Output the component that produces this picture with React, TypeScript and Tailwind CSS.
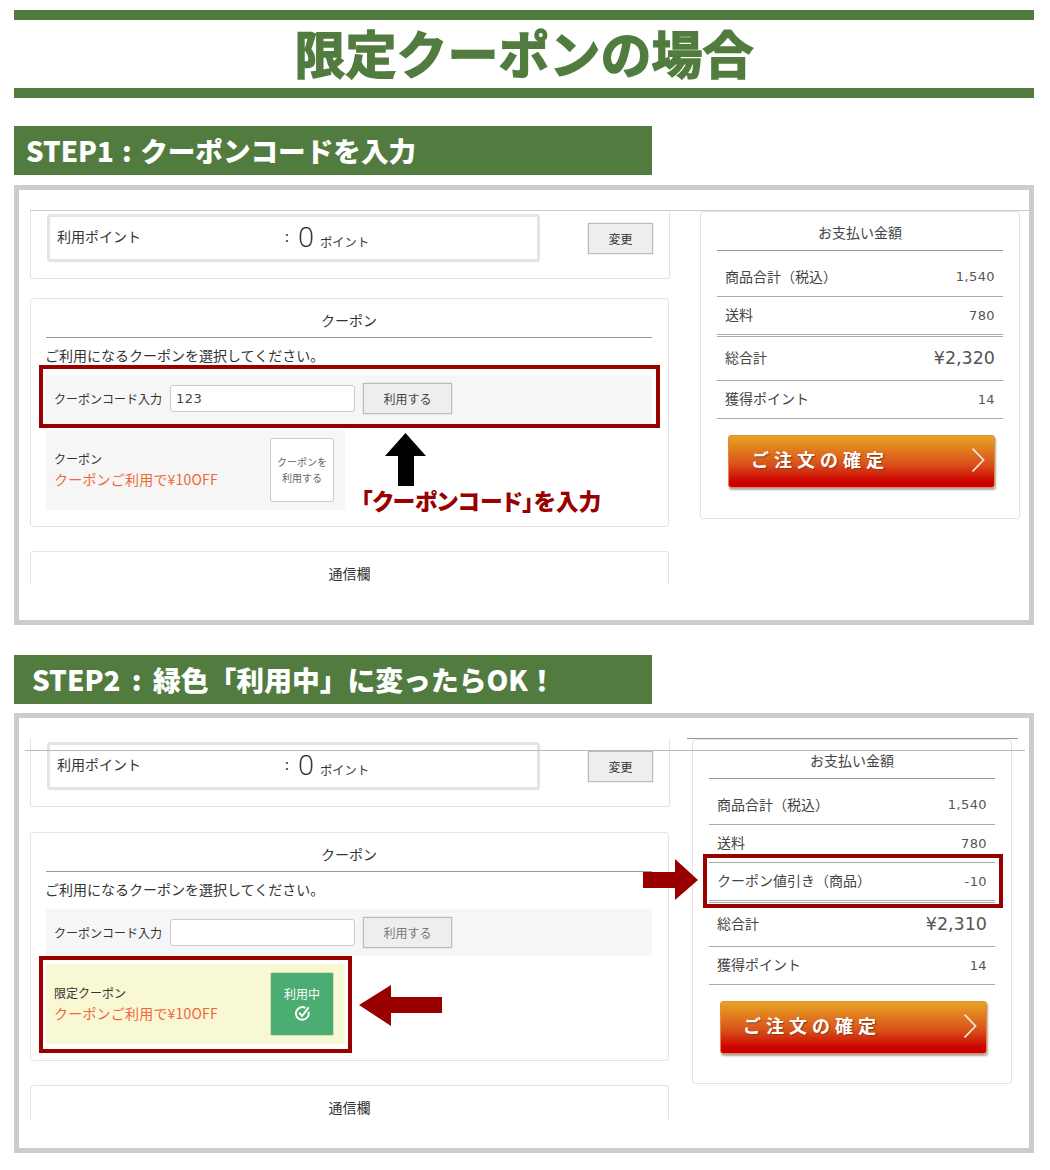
import React from "react";

const jp = "[font-family:'Noto_Sans_CJK_JP','Liberation_Sans',sans-serif]";

function Heading({ text, pl, spacing }: { text: string; pl: string; spacing: string }) {
  return (
    <div className={`flex h-[49px] w-[638px] items-center bg-[#527c3f] font-black text-white ${pl} ${spacing}`}>
      <span className="whitespace-pre">{text}</span>
    </div>
  );
}

function GrayButton({ label, muted }: { label: string; muted?: boolean }) {
  return (
    <div
      className={`flex h-[31px] w-[89px] shrink-0 items-center justify-center border border-[#bbbbbb] bg-[#eeeeee] text-[12px] shadow-[0_0_1px_#aaa] ${
        muted ? "text-[#777777]" : "text-[#444444]"
      }`}
    >
      {label}
    </div>
  );
}

function PointsCard() {
  return (
    <div className="flex h-[69px] items-start rounded-b-[3px] border border-t-0 border-[#e4e4e4] pl-[16px] pt-[4px]">
      <div className="flex h-[48px] w-[493px] items-center rounded-[3px] border-[3px] border-[#e4e4e4] pb-[4px] pl-[7px] text-[14px] text-[#333333]">
        <span className="w-[228px]">利用ポイント</span>
        <span className="w-[13px] text-[14px]">:</span>
        <span className="text-[28px] font-light leading-none text-[#222222] [font-family:'Open_Sans',sans-serif]">0</span>
        <span className="ml-[6px] mt-[12px] text-[12.3px]">ポイント</span>
      </div>
      <div className="ml-[48px] mt-[9px] flex h-[31px] w-[65px] items-center justify-center border border-[#bbbbbb] bg-[#eeeeee] text-[12px] text-[#333333] shadow-[0_0_1px_#aaa]">
        変更
      </div>
    </div>
  );
}

function CouponCard({ used }: { used?: boolean }) {
  return (
    <div className="h-[229px] w-[639px] rounded-[3px] border border-[#e4e4e4] pl-[15px] pr-[16px]">
      <div className="flex h-[39px] items-center justify-center border-b border-[#999999] pt-[4px] text-[14px] text-[#333333]">
        クーポン
      </div>
      <div className="-ml-[1px] flex h-[37px] items-center pb-[2px] text-[14px] text-[#333333]">
        ご利用になるクーポンを選択してください。
      </div>
      <div className={`flex items-center bg-[#f6f6f6] pl-[8px] ${used ? "mb-[8px] h-[47px]" : "mb-[6px] h-[49px] pb-[2px]"}`}>
        <span className="w-[116px] text-[12px] text-[#333333]">クーポンコード入力</span>
        <div className="flex h-[27px] w-[185px] items-center rounded-[3px] border border-[#cccccc] bg-white pl-[5px] text-[13px] tracking-[0.5px] text-[#444444] [font-family:'DejaVu_Sans',sans-serif]">
          {used ? "" : "123"}
        </div>
        <div className="ml-[8px]">
          <GrayButton label="利用する" muted={used} />
        </div>
      </div>
      <div className={`flex h-[80px] w-[299px] items-center justify-between pl-[8px] pr-[11px] ${used ? "bg-[#f9f8d4]" : "bg-[#f6f6f6]"}`}>
        <div className="pb-[3px]">
          <div className="text-[12px] leading-[20px] text-[#333333]">{used ? "限定クーポン" : "クーポン"}</div>
          <div className="text-[14px] leading-[20px] tracking-[0.2px] text-[#f0663c]">クーポンご利用で¥10OFF</div>
        </div>
        {used ? (
          <div className="flex h-[64px] w-[64px] flex-col items-center justify-center rounded-[2px] border border-[#d5e0b8] bg-[#4cad72] text-[12px] text-white">
            <span className="-mt-[2px] leading-[18px]">利用中</span>
            <svg width="17" height="17" viewBox="0 0 16 16" fill="none" stroke="white" strokeWidth="1.8" className="mt-[2px]">
              <path d="M13.6 6.3A6 6 0 1 1 10.8 2.7" />
              <path d="M4.8 7.2 7.6 10.4 13.8 2.2" />
            </svg>
          </div>
        ) : (
          <div className="flex h-[64px] w-[64px] flex-col items-center justify-center rounded-[3px] border border-[#cccccc] bg-white text-[10px] leading-[16px] text-[#666666]">
            <span>クーポンを</span>
            <span>利用する</span>
          </div>
        )}
      </div>
    </div>
  );
}

function ContactCard() {
  return (
    <div className="flex h-[34px] w-[639px] items-end justify-center rounded-t-[3px] border border-b-0 border-[#e4e4e4] pb-[1px] text-[14px] text-[#333333]">
      通信欄
    </div>
  );
}

function Row({ label, value, h, big, double }: { label: string; value: string; h: string; big?: boolean; double?: boolean }) {
  return (
    <div className={`flex items-center justify-between px-[8px] text-[14px] text-[#444444] ${h} ${double ? "border-b-[3px] border-double border-[#aaaaaa]" : "border-b border-[#aaaaaa]"}`}>
      <span className="-mt-[2px]">{label}</span>
      <span className={`text-[#555555] [font-family:'DejaVu_Sans',sans-serif] ${big ? "text-[17.5px] tracking-[0px]" : "text-[13px] tracking-[0.4px]"}`}>{value}</span>
    </div>
  );
}

function PayCard({ coupon, total, offset }: { coupon?: boolean; total: string; offset: string }) {
  return (
    <div className={`mt-[1px] w-[320px] rounded-[3px] border border-[#e4e4e4] px-[16px] ${offset} ${coupon ? "h-[345px]" : "h-[308px]"}`}>
      <div className="flex h-[39px] items-center justify-center border-b border-[#999999] pt-[3px] text-[14px] text-[#444444]">お支払い金額</div>
      <Row label="商品合計（税込）" value="1,540" h="h-[46px] pt-[7px]" />
      {coupon ? (
        <>
          <Row label="送料" value="780" h="h-[38px]" />
          <Row label="クーポン値引き（商品）" value="-10" h="h-[40px]" double />
        </>
      ) : (
        <Row label="送料" value="780" h="h-[40px]" double />
      )}
      <Row label="総合計" value={total} h="h-[44px]" big />
      <Row label="獲得ポイント" value="14" h="h-[38px]" />
      <div className="ml-[11px] mt-[16px] flex h-[53px] w-[267px] items-center justify-between rounded-[3px] border border-[#e58a3a] bg-[linear-gradient(#e8a423,#d9521a_55%,#cc0000_90%)] pb-[4px] pl-[22px] pr-[9px] shadow-[1px_2px_2px_#aaaaaa]">
        <span className="text-[18px] font-bold tracking-[5px] text-white [text-shadow:1px_1px_1px_#8a3a10]">ご注文の確定</span>
        <svg width="14" height="26" viewBox="0 0 14 26" fill="none" stroke="#f4e6dc" strokeWidth="1.8">
          <path d="M1.5 1.5 12.5 13 1.5 24.5" />
        </svg>
      </div>
    </div>
  );
}

export default function App() {
  return (
    <div className={`w-[1048px] bg-white px-[14px] pb-[17px] pt-[10px] ${jp}`}>
      <div className="flex h-[88px] items-center justify-center border-y-[10px] border-[#527c3f] pb-[4px] text-[51px] font-bold text-[#527c3f] [-webkit-text-stroke:1.5px_#527c3f]">
        限定クーポンの場合
      </div>

      <div className="mt-[28px]">
        <Heading text="STEP1 : クーポンコードを入力" pl="pl-[12px]" spacing="text-[27.6px] [word-spacing:2px]" />
      </div>
      <div className="relative mt-[10px] flex h-[440px] border-[5px] border-[#cccccc] pl-[11px] pt-[20px]">
        <div className="w-[640px]">
          <PointsCard />
          <div className="mt-[19px]"><CouponCard /></div>
          <div className="mt-[24px]"><ContactCard /></div>
        </div>
        <PayCard total="¥2,320" offset="ml-[30px]" />

        <div className="absolute left-[11px] top-[20px] h-px w-[1000px] bg-[#cccccc]" />
        <div className="absolute left-[20px] top-[175px] h-[63px] w-[621px] border-[4px] border-[#990000]" />
        <svg className="absolute left-[366px] top-[243px]" width="41" height="53" viewBox="0 0 41 53" fill="black">
          <path d="M20.5 0 41 23 29 23 29 53 13 53 13 23 0 23Z" />
        </svg>
        <div className="absolute left-[342px] top-[295px] whitespace-nowrap text-[22.8px] font-black leading-[32px] text-[#990000] [font-feature-settings:'palt']">
          「クーポンコード」を入力
        </div>
      </div>

      <div className="mt-[30px]">
        <Heading text="STEP2 : 緑色「利用中」に変ったらOK！" pl="pl-[18px]" spacing="text-[27.8px] [word-spacing:5px]" />
      </div>
      <div className="relative mt-[9px] flex h-[440px] border-[5px] border-[#cccccc] pl-[11px] pt-[20px]">
        <div className="w-[640px]">
          <PointsCard />
          <div className="mt-[25px]"><CouponCard used /></div>
          <div className="mt-[24px]"><ContactCard /></div>
        </div>
        <PayCard coupon total="¥2,310" offset="ml-[22px]" />

        <div className="absolute left-[6px] top-[32px] h-px w-[1000px] bg-[#bbbbbb]" />
        <div className="absolute left-[668px] top-[20px] h-px w-[331px] bg-[#999999]" />
        <div className="absolute left-[20px] top-[238px] h-[97px] w-[313px] border-[4px] border-[#990000]" />
        <div className="absolute left-[684px] top-[136px] h-[54px] w-[300px] border-[4px] border-[#990000]" />
        <svg className="absolute left-[340px] top-[267px]" width="83" height="41" viewBox="0 0 83 41" fill="#990000">
          <path d="M0 20 32 0 32 12 83 12 83 28 32 28 32 41Z" />
        </svg>
        <svg className="absolute left-[624px] top-[141px]" width="55" height="41" viewBox="0 0 55 41" fill="#990000">
          <path d="M55 21 32 0 32 13 0 13 0 29 32 29 32 41Z" />
        </svg>
      </div>
    </div>
  );
}
